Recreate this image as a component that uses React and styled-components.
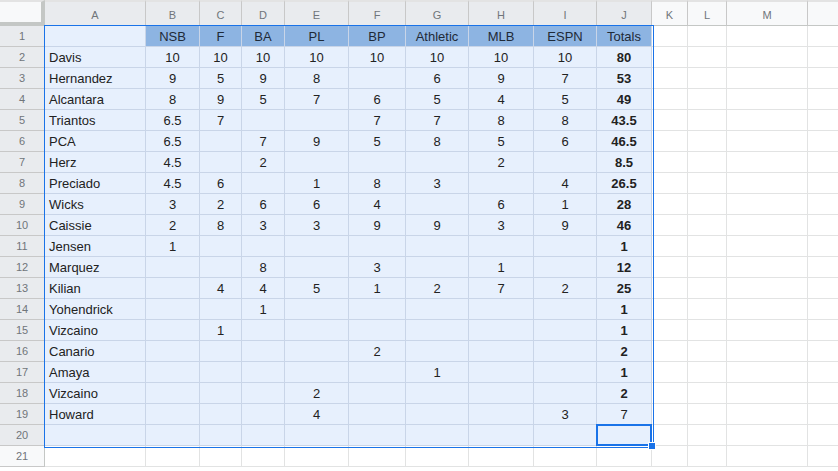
import styled, { createGlobalStyle } from "styled-components";

const GlobalStyle = createGlobalStyle`
  html, body { margin: 0; padding: 0; background: #fff; }
  body { font-family: "Liberation Sans", Arial, sans-serif; overflow: hidden; }
`;

const COLS = [
  { key: "A", w: 101 },
  { key: "B", w: 54 },
  { key: "C", w: 42 },
  { key: "D", w: 43 },
  { key: "E", w: 64 },
  { key: "F", w: 57 },
  { key: "G", w: 63 },
  { key: "H", w: 65 },
  { key: "I", w: 63 },
  { key: "J", w: 55 },
  { key: "K", w: 36 },
  { key: "L", w: 39 },
  { key: "M", w: 81 },
  { key: "", w: 60 },
];

const HEAD = ["", "NSB", "F", "BA", "PL", "BP", "Athletic", "MLB", "ESPN", "Totals"];

const DATA = [
  ["Davis", "10", "10", "10", "10", "10", "10", "10", "10", "80"],
  ["Hernandez", "9", "5", "9", "8", "", "6", "9", "7", "53"],
  ["Alcantara", "8", "9", "5", "7", "6", "5", "4", "5", "49"],
  ["Triantos", "6.5", "7", "", "", "7", "7", "8", "8", "43.5"],
  ["PCA", "6.5", "", "7", "9", "5", "8", "5", "6", "46.5"],
  ["Herz", "4.5", "", "2", "", "", "", "2", "", "8.5"],
  ["Preciado", "4.5", "6", "", "1", "8", "3", "", "4", "26.5"],
  ["Wicks", "3", "2", "6", "6", "4", "", "6", "1", "28"],
  ["Caissie", "2", "8", "3", "3", "9", "9", "3", "9", "46"],
  ["Jensen", "1", "", "", "", "", "", "", "", "1"],
  ["Marquez", "", "", "8", "", "3", "", "1", "", "12"],
  ["Kilian", "", "4", "4", "5", "1", "2", "7", "2", "25"],
  ["Yohendrick", "", "", "1", "", "", "", "", "", "1"],
  ["Vizcaino", "", "1", "", "", "", "", "", "", "1"],
  ["Canario", "", "", "", "", "2", "", "", "", "2"],
  ["Amaya", "", "", "", "", "", "1", "", "", "1"],
  ["Vizcaino", "", "", "", "2", "", "", "", "", "2"],
  ["Howard", "", "", "", "4", "", "", "", "3", "7"],
  [],
  [],
];

// rows 1..20, cols A..J are selected
const SEL_COLS = 10;
const SEL_ROWS = 20;

const Sheet = styled.div`
  position: relative;
  display: grid;
  grid-template-columns: 45px ${COLS.map((c) => c.w + "px").join(" ")};
  grid-auto-rows: 21px;
  grid-template-rows: 26px;
  font-size: 13px;
  color: #222;
`;

const Corner = styled.div`
  box-sizing: border-box;
  background: #f8f9fa;
  border-right: 4px solid #c4c7c5;
  border-bottom: 4px solid #c4c7c5;
  border-top: 2px solid #e3e3e3;
`;

const ColHead = styled.div`
  box-sizing: border-box;
  display: flex;
  align-items: center;
  justify-content: center;
  padding-top: 2px;
  background: ${(p) => (p.$sel ? "#e9ebee" : "#f8f9fa")};
  border-top: 2px solid #e3e3e3;
  border-right: 1px solid #c8c8c8;
  border-bottom: 1px solid #c4c7c5;
  color: #70757a;
  font-size: 11px;
`;

const RowHead = styled.div`
  box-sizing: border-box;
  display: flex;
  align-items: center;
  justify-content: center;
  background: ${(p) => (p.$sel ? "#e9ebee" : "#f8f9fa")};
  border-right: 1px solid #c4c7c5;
  border-bottom: 1px solid #c8c8c8;
  color: #70757a;
  font-size: 11px;
`;

const Cell = styled.div`
  box-sizing: border-box;
  display: flex;
  align-items: center;
  justify-content: ${(p) => (p.$left ? "flex-start" : "center")};
  padding: 1px 4px 0;
  white-space: nowrap;
  overflow: hidden;
  background: ${(p) => (p.$head ? "#8db4e2" : p.$sel ? "#e7f0fd" : "#fff")};
  border-right: 1px solid ${(p) => (p.$sel ? "#c9d5e8" : "#e2e3e3")};
  border-bottom: 1px solid ${(p) => (p.$sel ? "#c9d5e8" : "#e2e3e3")};
  font-weight: ${(p) => (p.$bold ? 700 : 400)};
  color: ${(p) => (p.$head ? "#1f2a37" : "#222")};
`;

const Selection = styled.div`
  position: absolute;
  left: 44px;
  top: 25px;
  width: 608px;
  height: 421px;
  border: 1px solid #1a73e8;
  pointer-events: none;
`;

const ActiveCell = styled.div`
  position: absolute;
  left: 596px;
  top: 424px;
  width: 52px;
  height: 18px;
  border: 2px solid #1a73e8;
  pointer-events: none;
`;

const Handle = styled.span`
  position: absolute;
  right: -6px;
  bottom: -6px;
  width: 6px;
  height: 6px;
  background: #1a73e8;
  border: 1px solid #fff;
`;

export default function App() {
  const rows = [HEAD, ...DATA];
  return (
    <>
      <GlobalStyle />
      <Sheet>
        <Corner />
        {COLS.map((c, i) => (
          <ColHead key={"h" + i} $sel={i < SEL_COLS}>{c.key}</ColHead>
        ))}
        {rows.map((row, r) => {
          const sel = r < SEL_ROWS;
          return [
            <RowHead key={"r" + r} $sel={sel}>{r + 1}</RowHead>,
            ...COLS.map((c, ci) => {
              const inSel = sel && ci < SEL_COLS;
              const val = row[ci] || "";
              return (
                <Cell
                  key={r + "-" + ci}
                  $sel={inSel}
                  $head={r === 0 && ci > 0 && ci < SEL_COLS}
                  $left={ci === 0}
                  $bold={ci === 9 && r > 0 && r !== 18}
                >
                  {val}
                </Cell>
              );
            }),
          ];
        })}
        <Selection />
        <ActiveCell>
          <Handle />
        </ActiveCell>
      </Sheet>
    </>
  );
}
